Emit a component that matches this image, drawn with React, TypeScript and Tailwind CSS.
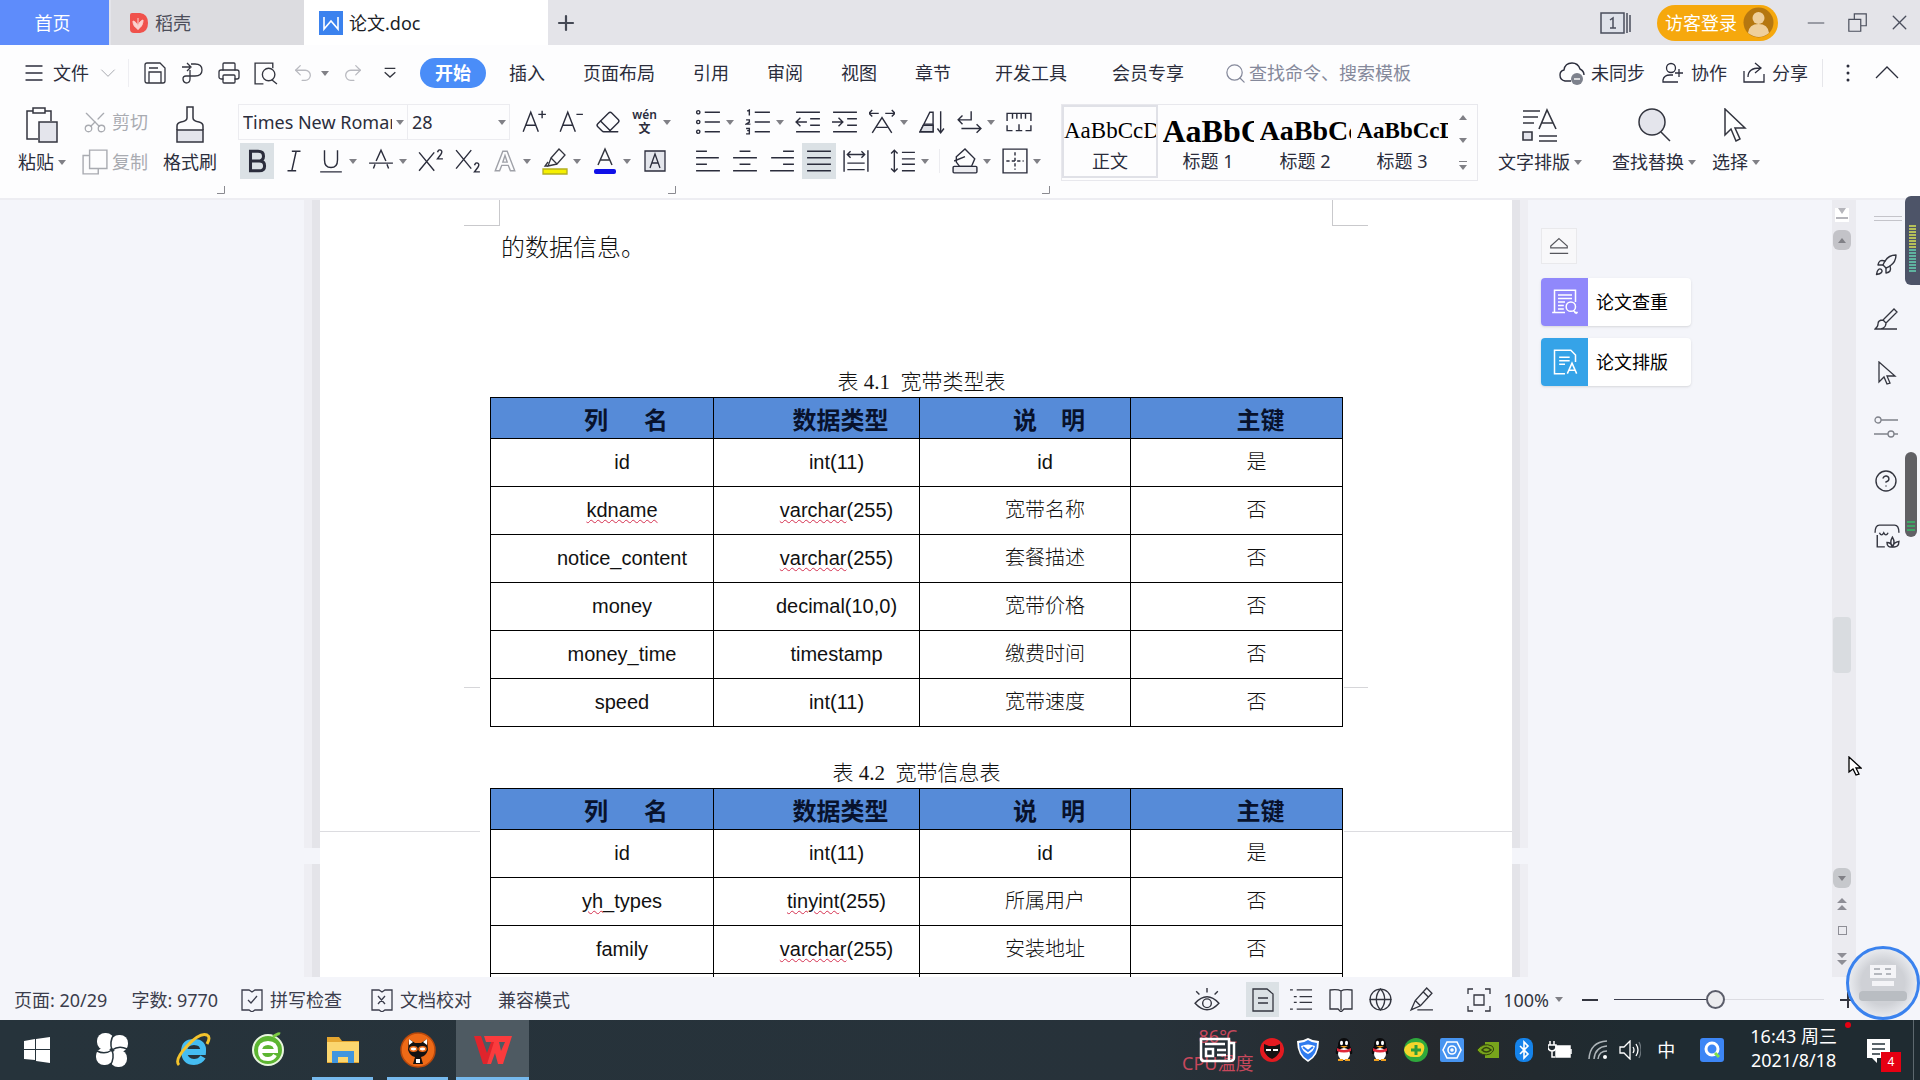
import React from "react";
import {
  CircleHelp,
  Eraser,
  Globe,
  Menu,
  Plus,
  Printer,
  Redo2,
  Rocket,
  Scissors,
  Search,
  Undo2,
  X,
} from "lucide-react";

type Row = {
  name: string;
  type: string;
  desc: string;
  key: string;
  wavy?: string;
};

const broadbandTypes: Row[] = [
  { name: "id", type: "int(11)", desc: "id", key: "是" },
  { name: "kdname", type: "varchar(255)", desc: "宽带名称", key: "否", wavy: "kdname" },
  { name: "notice_content", type: "varchar(255)", desc: "套餐描述", key: "否" },
  { name: "money", type: "decimal(10,0)", desc: "宽带价格", key: "否" },
  { name: "money_time", type: "timestamp", desc: "缴费时间", key: "否" },
  { name: "speed", type: "int(11)", desc: "宽带速度", key: "否" },
];

const broadbandInfo: Row[] = [
  { name: "id", type: "int(11)", desc: "id", key: "是" },
  { name: "yh_types", type: "tinyint(255)", desc: "所属用户", key: "否", wavy: "yh" },
  { name: "family", type: "varchar(255)", desc: "安装地址", key: "否" },
];

const menuTabs = ["插入", "页面布局", "引用", "审阅", "视图", "章节"];

const styleItems = [
  { label: "标题 1", sample: "AaBbC", cls: "text-[32px]" },
  { label: "标题 2", sample: "AaBbCc", cls: "text-[28px]" },
  { label: "标题 3", sample: "AaBbCcD", cls: "text-[23px]" },
];

function Ico({
  children,
  size = 26,
  className = "",
  sw = 1.3,
}: {
  children: React.ReactNode;
  size?: number;
  className?: string;
  sw?: number;
}) {
  return (
    <svg
      width={size}
      height={size}
      viewBox="0 0 24 24"
      fill="none"
      stroke="currentColor"
      strokeWidth={sw}
      className={`shrink-0 ${className}`}
    >
      {children}
    </svg>
  );
}

function Arrow({ className = "" }: { className?: string }) {
  return (
    <svg width="8" height="5" viewBox="0 0 8 5" className={`shrink-0 text-[#808086] ${className}`}>
      <path d="M0 0h8L4 5z" fill="currentColor" />
    </svg>
  );
}

function Tool({
  label,
  children,
  arrow,
  active,
}: {
  label: string;
  children: React.ReactNode;
  arrow?: boolean;
  active?: boolean;
}) {
  return (
    <button aria-label={label} className={`flex h-9 items-center ${arrow ? "w-[50px]" : "w-[37px]"}`}>
      <span className="flex w-[37px] shrink-0 justify-center">
        <span className={`flex h-9 w-[34px] items-center justify-center ${active ? "bg-[#dbe1e5]" : ""}`}>
          {children}
        </span>
      </span>
      {arrow && <Arrow />}
    </button>
  );
}

function Corner({ className = "" }: { className?: string }) {
  return (
    <svg width="8" height="8" viewBox="0 0 8 8" className={`mb-1 self-end text-[#8a8a90] ${className}`}>
      <path d="M7.5 0v7.5H0" fill="none" stroke="currentColor" />
    </svg>
  );
}

function TitleBar() {
  return (
    <header className="flex h-[45px] bg-[#e4e4e9] text-lg">
      <button className="w-[109px] bg-[#5e8cfb] pr-1 text-white">首页</button>
      <button className="ml-0.5 flex w-[193px] items-center gap-1.5 bg-[#dcdce0] pl-[18px] text-[#4c4e5a]">
        <svg width="20" height="22" viewBox="0 0 20 22">
          <path d="M1 3Q1 1 3 1h8q8 1 8 10t-8 10H5q-4 0-4-4z" fill="#f0524c" />
          <path d="M9 18V6M9 17C5 15 4 12 4 9c3 1 5 3 5 8zm0 0c4-2 5-6 5-9-3 1-5 4-5 9z" fill="#fbd3cf" stroke="#fbd3cf" />
        </svg>
        稻壳
      </button>
      <button className="flex w-[244px] items-center gap-1.5 bg-white pl-[15px] text-[#1c1e26]">
        <svg width="24" height="24" viewBox="0 0 24 24">
          <path d="M0 0h24v24H0z" fill="#3b82ee" />
          <path d="M5 6v12l7-8 7 8V6" fill="none" stroke="#fff" strokeWidth="1.600" />
        </svg>
        论文.doc
      </button>
      <button aria-label="新建" className="ml-1 px-0.5 text-[#444854]">
        <Plus size={24} strokeWidth={2.2} />
      </button>
      <div className="ml-auto flex items-center text-[#4a4e5c]">
        <button aria-label="窗口">
          <svg width="34" height="26" viewBox="0 0 34 26" fill="none" stroke="currentColor" strokeWidth="1.5">
            <path d="M2 3h23v20H2z" fill="#dfe2ea" />
            <path d="M28 3v20M31 5v17M11 10l3-2v10M11 18h6" />
          </svg>
        </button>
        <button className="ml-6 flex h-9 items-center gap-1.5 rounded-full bg-[#f6a80d] pr-1 pl-2 text-white">
          访客登录
          <svg width="31" height="31" viewBox="0 0 31 31">
            <circle cx="15.500" cy="15.500" r="15" fill="#b57710" />
            <circle cx="15.500" cy="11" r="6" fill="#efcf9b" />
            <path d="M5 26q1-9 10.500-9T26 26q-10 8-21 0z" fill="#efcf9b" />
          </svg>
        </button>
        <button aria-label="最小化" className="ml-[29px]">
          <Ico size={18}><path d="M1 12h22" /></Ico>
        </button>
        <button aria-label="还原" className="ml-[22px]">
          <Ico size={22}><path d="M2 8h13v13H2zM8 8V2h13v13h-6" /></Ico>
        </button>
        <button aria-label="关闭" className="mr-2 ml-[18px]">
          <X size={25} strokeWidth={1.3} />
        </button>
      </div>
    </header>
  );
}

function MenuBar() {
  return (
    <nav className="flex h-14 items-center text-lg text-[#2b2d3c]">
      <button className="ml-[22px] flex items-center gap-[7px]">
        <Menu size={24} strokeWidth={1.4} />
        文件
        <Ico size={16} className="ml-1 text-[#9a9ca4]"><path d="M2 7l10 10L22 7" /></Ico>
      </button>
      <div className="ml-3 h-7 w-px bg-[#eeeef2]" />
      <div className="ml-[7px] flex text-[#33353f]">
        <Tool label="保存">
          <Ico size={24}><path d="M2 4q0-2 2-2h13l5 5v13q0 2-2 2H4q-2 0-2-2zM6 22V11h12v11M6 7h9" /></Ico>
        </Tool>
        <Tool label="输出">
          <Ico size={24}><path d="M2 6h8M7 2l4 4-4 4M11 3h4q7 0 7 6t-7 6H6q-3 0-3 3t3 4q4 0 4-4V9" /></Ico>
        </Tool>
        <Tool label="打印">
          <Printer size={24} strokeWidth={1.3} />
        </Tool>
        <Tool label="打印预览">
          <Ico size={25}><path d="M10 22H2V2h17v5" /><circle cx="15" cy="13" r="6" /><path d="M18 18l5 4" /></Ico>
        </Tool>
        <Tool label="撤销" arrow>
          <Undo2 size={22} strokeWidth={1.4} className="text-[#b9bac0]" />
        </Tool>
        <Tool label="恢复">
          <Redo2 size={22} strokeWidth={1.4} className="text-[#b9bac0]" />
        </Tool>
        <Tool label="自定义快速访问">
          <Ico size={16} sw={2}><path d="M4 5h16M4 11l8 7 8-7" /></Ico>
        </Tool>
      </div>
      <button className="ml-3 h-[30px] rounded-full bg-[#4a8df8] px-[15px] font-bold text-white">开始</button>
      <div className="ml-[23px] flex gap-[38px]">
        {menuTabs.map((tab) => (
          <button key={tab}>{tab}</button>
        ))}
      </div>
      <button className="ml-[44px]">开发工具</button>
      <button className="ml-[45px]">会员专享</button>
      <label className="ml-[40px] flex flex-1 items-center gap-0.5 text-[#85899b]">
        <Search size={23} strokeWidth={1.3} />
        <input
          aria-label="查找命令"
          placeholder="查找命令、搜索模板"
          className="w-[180px] bg-transparent outline-none placeholder:text-[#85899b]"
        />
      </label>
      <button className="flex items-center gap-1.5">
        <svg width="26" height="24" viewBox="0 0 26 24" fill="none" stroke="currentColor" strokeWidth="1.4">
          <path d="M12 20H6q-5-1-5-6 0-4 4-5 1-7 8-7 6 0 8 6 4 2 4 6" />
          <circle cx="18" cy="18" r="6" fill="#7d818c" stroke="none" />
          <path d="M15 18h6" stroke="#fff" />
        </svg>
        未同步
      </button>
      <button className="ml-4 flex items-center gap-1.5">
        <Ico size={24}><circle cx="10" cy="7" r="4.500" /><path d="M17 21H2v-2q1-5 7-5h3M18 8v8M14 12h8" /></Ico>
        协作
      </button>
      <button className="ml-[15px] flex items-center gap-1.5">
        <Ico size={24}><path d="M2 10v11h20v-8M6 16q0-9 12-9M13 2l6 5-6 5" /></Ico>
        分享
      </button>
      <div className="ml-3.5 h-7 w-px bg-[#e6e6ea]" />
      <button aria-label="更多" className="ml-[22px]">
        <svg width="6" height="20" viewBox="0 0 6 20" fill="currentColor">
          <circle cx="3" cy="3" r="1.500" />
          <circle cx="3" cy="10" r="1.500" />
          <circle cx="3" cy="17" r="1.500" />
        </svg>
      </button>
      <button aria-label="收起功能区" className="mr-[21px] ml-6">
        <Ico size={24}><path d="M1 17L12 6l11 11" /></Ico>
      </button>
    </nav>
  );
}

function BigButton({ label, children, arrow }: { label: string; children: React.ReactNode; arrow?: boolean }) {
  return (
    <button className="flex flex-col items-center">
      <span className="flex h-[42px] items-center">{children}</span>
      <span className="flex h-8 items-center gap-1">
        {label}
        {arrow && <Arrow />}
      </span>
    </button>
  );
}

function FontGroup() {
  return (
    <div className="ml-[13px]">
      <div className="flex h-9 items-center">
        <div className="relative flex h-9 w-[170px] items-center border border-[#ececf0]">
          <input aria-label="字体" defaultValue="Times New Roman" className="w-[153px] pl-1 outline-none" />
          <Arrow className="ml-1" />
        </div>
        <div className="mr-[5px] flex h-9 w-[102px] items-center border border-l-0 border-[#ececf0]">
          <input aria-label="字号" defaultValue="28" className="w-[90px] pl-1 outline-none" />
          <Arrow />
        </div>
        <Tool label="增大字号">
          <Ico><path d="M2 21L9 3l7 18M4 15h10M16 5h7M19.500 1.500v7" /></Ico>
        </Tool>
        <Tool label="减小字号">
          <Ico><path d="M2 21L9 3l7 18M4 15h10M17 5h6" /></Ico>
        </Tool>
        <Tool label="清除格式">
          <Eraser size={26} strokeWidth={1.3} />
        </Tool>
        <Tool label="拼音指南" arrow>
          <span className="flex flex-col items-center text-xs leading-[14px] font-semibold">
            <span>wén</span>
            <span>文</span>
          </span>
        </Tool>
      </div>
      <div className="mt-[3px] flex h-9 items-center">
        <Tool label="加粗" active>
          <Ico sw={2.8}><path d="M6 3h7q5 0 5 4.500T13 12H6zM6 12h8q5 0 5 4.500T14 21H6z" /></Ico>
        </Tool>
        <Tool label="倾斜">
          <Ico><path d="M10 3h8M6 21h8M14 3l-4 18" /></Ico>
        </Tool>
        <Tool label="下划线" arrow>
          <Ico><path d="M6 2v9q0 7 6 7t6-7V2M2 22h20" /></Ico>
        </Tool>
        <Tool label="删除线" arrow>
          <Ico><path d="M7.500 12L12 2l4.500 10M5 19l1.500-4M19 19l-1.500-4M1 14h22" /></Ico>
        </Tool>
        <Tool label="上标">
          <Ico><path d="M1 4l14 17M15 4L1 21M18 4q1-3 3-2 2 1 0 4l-3 4h5" /></Ico>
        </Tool>
        <Tool label="下标">
          <Ico><path d="M1 2l14 17M15 2L1 19M18 16q1-3 3-2 2 1 0 4l-3 4h5" /></Ico>
        </Tool>
        <Tool label="文字效果" arrow>
          <Ico className="text-[#9fa1a8]"><path d="M3 21L10 3h4l7 18h-4l-2-5H9l-2 5zM12 7l-2 6h4z" /></Ico>
        </Tool>
        <Tool label="突出显示" arrow>
          <svg width="26" height="28" viewBox="0 0 26 28" fill="none" stroke="#33353f" strokeWidth="1.300">
            <path d="M1 22h24v5H1z" fill="#f6f000" stroke="#b3ae20" />
            <path d="M9 11l8-9 6 6-8 9zM9 11l-3 8 9-2M6 19H3l3-4" />
          </svg>
        </Tool>
        <Tool label="字体颜色" arrow>
          <svg width="24" height="28" viewBox="0 0 24 28" fill="none" stroke="#33353f" strokeWidth="1.500">
            <path d="M5 18L12 2l7 16M7 13h10" />
            <rect x="1" y="22" width="22" height="5" rx="2" fill="#1010e8" stroke="none" />
          </svg>
        </Tool>
        <Tool label="字符底纹">
          <Ico size={24}><path d="M2 2h20v20H2z" fill="#e4e6ec" /><path d="M7 19l5-14 5 14M8.500 14h7" /></Ico>
        </Tool>
      </div>
    </div>
  );
}

function ParagraphGroup() {
  return (
    <div className="ml-[13px]">
      <div className="flex h-9 items-center">
        <Tool label="项目符号" arrow>
          <Ico>
            <path d="M9 3h14M9 12h14M9 21h14" />
            <circle cx="3" cy="3" r="1.500" />
            <circle cx="3" cy="12" r="1.500" />
            <circle cx="3" cy="21" r="1.500" />
          </Ico>
        </Tool>
        <Tool label="编号" arrow>
          <Ico><path d="M9 3h14M9 12h14M9 21h14M2 2l2-1v5M1 10h3v2l-3 2h4M1 18h3v5H1M2 20h2" /></Ico>
        </Tool>
        <Tool label="减少缩进">
          <Ico><path d="M1 3h22M14 9h9M14 15h9M1 21h22M1 12h10M5 8l-4 4 4 4" /></Ico>
        </Tool>
        <Tool label="增加缩进">
          <Ico><path d="M1 3h22M14 9h9M14 15h9M1 21h22M0 12h10M6 8l4 4-4 4" /></Ico>
        </Tool>
        <Tool label="字符缩放" arrow>
          <Ico><path d="M3 22L12 8l9 14M7 17h10M0 4h9M3 1L0 4l3 3M15 4h9M21 1l3 3-3 3" /></Ico>
        </Tool>
        <Tool label="排序">
          <Ico><path d="M1 21L10 3h3v18zM5 14h8M20 2v20M17 18l3 4 3-4" /><path d="M4 15h9v6H1z" fill="#dfe1e7" /></Ico>
        </Tool>
        <Tool label="换行标记" arrow>
          <Ico><path d="M14 2v8H2M6 6l-4 4 4 4M5 18h18M19 14l4 4-4 4" /></Ico>
        </Tool>
        <Tool label="制表位">
          <Ico><path d="M1 11V4h22v7M6 4v5M10 4v5M14 4v5M18 4v5M1 15v5h5M18 20h5v-5M9 20h6M12 14v6" /></Ico>
        </Tool>
      </div>
      <div className="mt-[3px] flex h-9 items-center">
        <Tool label="左对齐">
          <Ico><path d="M1 3h10M1 9h21M1 15h10M1 21h22" /></Ico>
        </Tool>
        <Tool label="居中">
          <Ico><path d="M7 3h10M1 9h22M7 15h10M1 21h22" /></Ico>
        </Tool>
        <Tool label="右对齐">
          <Ico><path d="M13 3h10M2 9h21M13 15h10M1 21h22" /></Ico>
        </Tool>
        <Tool label="两端对齐" active>
          <Ico><path d="M1 3h22M1 9h22M1 15h22M1 21h22" /></Ico>
        </Tool>
        <Tool label="分散对齐">
          <Ico><path d="M1 2v20M23 2v20M4 6h16M7 3L4 6l3 3M17 3l3 3-3 3M4 14h16M4 20h16" /></Ico>
        </Tool>
        <div className="w-2.5" />
        <Tool label="行距" arrow>
          <Ico><path d="M4 2v20M1 5l3-3 3 3M1 19l3 3 3-3M11 4h12M11 10h12M11 15h12M11 21h12" /></Ico>
        </Tool>
        <div className="mr-1.5 ml-[5px] h-6 w-px bg-[#ececf0]" />
        <Tool label="底纹颜色" arrow>
          <Ico><path d="M4 8l8-7 9 9-3 7H7l-3-4zM2 12l10-4" /><rect x="1" y="17" width="22" height="6" rx="1" fill="#ececf0" /></Ico>
        </Tool>
        <Tool label="边框" arrow>
          <Ico><path d="M1 1h22v22H1z" /><path d="M4 12h16M12 4v16" strokeDasharray="3 2" /></Ico>
        </Tool>
      </div>
    </div>
  );
}

function StyleGallery() {
  return (
    <div className="ml-[11px] flex h-[77px] border border-[#e8e8ed]">
      <button className="flex h-[73px] w-[96px] flex-col items-center border-2 border-[#e0e1e7]">
        <span className="h-[42px] w-full overflow-hidden pt-1 text-left [font-family:'Liberation_Serif',serif] text-[23px] leading-10 text-black">
          AaBbCcD
        </span>
        正文
      </button>
      {styleItems.map((item) => (
        <button key={item.label} className="ml-[3px] flex w-[94px] flex-col items-center pt-0.5">
          <span
            className={`h-[42px] w-[91px] overflow-hidden pt-1 text-left [font-family:'Liberation_Serif',serif] leading-10 font-bold text-black ${item.cls}`}
          >
            {item.sample}
          </span>
          {item.label}
        </button>
      ))}
      <div className="flex w-7 flex-col items-center justify-between py-2.5">
        <Arrow className="rotate-180" />
        <Arrow />
        <span className="flex flex-col items-center gap-[3px] text-[#808086]">
          <span className="h-px w-2 bg-[#808086]" />
          <Arrow />
        </span>
      </div>
    </div>
  );
}

function Ribbon() {
  return (
    <div className="flex h-[99px] items-start border-b-2 border-[#ededf2] pt-[3px] text-lg leading-6 text-[#2b2d3c]">
      <div className="ml-[18px]">
        <BigButton label="粘贴" arrow>
          <svg width="32" height="36" viewBox="0 0 32 36" fill="none" stroke="#33353f" strokeWidth="1.500">
            <path d="M12 32H1V4h6M19 4h6v10M7 1h12v5H7z" />
            <path d="M13 15h18v20H13z" fill="#e4e5ec" />
          </svg>
        </BigButton>
      </div>
      <div className="ml-4 text-[#a9abb1]">
        <button className="flex h-9 items-center gap-1">
          <Scissors size={26} strokeWidth={1.2} className="-rotate-90" />
          剪切
        </button>
        <button className="mt-1 flex h-9 items-center gap-1">
          <Ico><path d="M7 1h16v17H7zM7 6H1v17h14v-5" /></Ico>
          复制
        </button>
      </div>
      <div className="ml-[15px]">
        <BigButton label="格式刷">
          <svg width="28" height="38" viewBox="0 0 28 38" fill="none" stroke="#33353f" strokeWidth="1.500">
            <path d="M1 24h26v12H1z" fill="#e4e5ec" />
            <path d="M1 24v-4q0-3 4-4 6-1 6-4V1h6v11q0 3 6 4 4 1 4 4v4" />
          </svg>
        </BigButton>
      </div>
      <Corner />
      <FontGroup />
      <Corner className="-ml-2" />
      <ParagraphGroup />
      <Corner className="-ml-1" />
      <StyleGallery />
      <div className="ml-5 flex">
        <BigButton label="文字排版" arrow>
          <svg width="36" height="34" viewBox="0 0 36 34" fill="none" stroke="#33353f" strokeWidth="1.600">
            <path d="M1 3h17M1 9h15M1 15h11M17 28h18M17 33h18M17 21l8-19 9 19M20 15h11" />
            <path d="M1 24h9v8H1z" fill="#e4e5ec" />
          </svg>
        </BigButton>
        <div className="w-[30px]" />
        <BigButton label="查找替换" arrow>
          <svg width="34" height="34" viewBox="0 0 34 34" fill="none" stroke="#33353f" strokeWidth="1.500">
            <circle cx="15" cy="14" r="13" fill="#e4e5ec" />
            <path d="M24 24l9 9" />
          </svg>
        </BigButton>
        <div className="w-4" />
        <BigButton label="选择" arrow>
          <svg width="26" height="34" viewBox="0 0 26 34" fill="none" stroke="#33353f" strokeWidth="1.500">
            <path d="M2 1v26l6-6 5 12 4-2-5-11h10z" fill="#fff" />
          </svg>
        </BigButton>
      </div>
    </div>
  );
}

function Wavy({ text, word }: { text: string; word?: string }) {
  if (!word || !text.startsWith(word)) return <>{text}</>;
  return (
    <>
      <span className="underline decoration-[#d5304f] decoration-wavy decoration-1 underline-offset-2">{word}</span>
      {text.slice(word.length)}
    </>
  );
}

function SchemaTable({ caption, rows, shift }: { caption: string; rows: Row[]; shift?: boolean }) {
  return (
    <table className="w-[853px] table-fixed border-collapse text-center text-xl leading-6 text-[#111]">
      <caption
        className={`h-[30px] text-[21px] leading-[30px] font-light whitespace-pre text-[#111] ${shift ? "pl-[10px]" : ""}`}
      >
        {caption}
      </caption>
      <colgroup>
        <col className="w-[223px]" />
        <col className="w-[206px]" />
        <col className="w-[211px]" />
        <col className="w-[212px]" />
      </colgroup>
      <thead>
        <tr className="h-[41px] bg-[#568bd8] text-2xl leading-8 whitespace-pre text-[#08122c]">
          <th className="border border-black p-0 pt-1.5 pl-12">{"列      名"}</th>
          <th className="border border-black p-0 pt-1.5 pl-12">数据类型</th>
          <th className="border border-black p-0 pt-1.5 pl-12">{"说    明"}</th>
          <th className="border border-black p-0 pt-1.5 pl-12">主键</th>
        </tr>
      </thead>
      <tbody className="font-light [font-family:'Liberation_Sans','Noto_Sans_CJK_SC',sans-serif]">
        {rows.map((row) => (
          <tr key={row.name} className="h-12">
            <td className="border border-black p-0 pb-0.5 pl-10">
              <Wavy text={row.name} word={row.wavy} />
            </td>
            <td className="border border-black p-0 pb-0.5 pl-10">
              <Wavy text={row.type} word={row.type.match(/^(varchar|tinyint)/)?.[0]} />
            </td>
            <td className="border border-black p-0 pb-0.5 pl-10">{row.desc}</td>
            <td className="border border-black p-0 pb-0.5 pl-10">{row.key}</td>
          </tr>
        ))}
        {/* the next row starts right at the bottom edge of the view */}
        <tr className={shift ? "hidden" : "h-12"}>
          <td className="border border-black" />
          <td className="border border-black" />
          <td className="border border-black" />
          <td className="border border-black" />
        </tr>
      </tbody>
    </table>
  );
}

function PageSheet() {
  return (
    <div className="relative h-0 min-h-full w-[1192px] bg-white [font-family:'Liberation_Serif','Noto_Sans_CJK_SC',serif]">
      {/* margin marks and the page break */}
      <div className="absolute top-0 left-[144px] h-[26px] w-9 border-r border-b border-[#c9c9cc]" />
      <div className="absolute top-0 right-[144px] h-[26px] w-9 border-b border-l border-[#c9c9cc]" />
      <div className="absolute top-[487px] left-[144px] w-4 border-t border-[#d6d6d9]" />
      <div className="absolute top-[487px] right-[144px] w-6 border-t border-[#d6d6d9]" />
      <div className="absolute top-[631px] left-0 w-40 border-t border-[#dcdce0]" />
      <div className="absolute top-[631px] right-0 w-[168px] border-t border-[#dcdce0]" />
      <p className="pt-8 pl-[181px] text-2xl leading-8 font-light text-[#111]">的数据信息。</p>
      <div className="mt-[103px] ml-[170px] flex flex-col gap-[31px]">
        <SchemaTable caption="表 4.1  宽带类型表" rows={broadbandTypes} shift />
        <SchemaTable caption="表 4.2  宽带信息表" rows={broadbandInfo} />
      </div>
    </div>
  );
}

function PageEdge({ flip }: { flip?: boolean }) {
  return (
    <div className={`flex w-4 flex-col gap-4 ${flip ? "rotate-y-180" : "ml-auto"}`}>
      <div className="h-[648px] border-r-8 border-[#e4e4e9] bg-[#eeeef3]" />
      <div className="flex-1 border-r-8 border-[#e4e4e9] bg-[#eeeef3]" />
    </div>
  );
}

function AssistPanel() {
  return (
    <div className="ml-[13px] flex flex-col items-start pt-[28px] text-lg text-black">
      <button aria-label="收起" className="flex h-9 w-9 items-center justify-center border border-[#e9e9ec] bg-[#f8f8fa]">
        <Ico size={22} className="text-[#55565c]"><path d="M12 4l9 8v2H3v-2zM2 20h20" /></Ico>
      </button>
      <button className="mt-3.5 flex h-12 w-[150px] items-center overflow-hidden rounded bg-white shadow-sm">
        <span className="flex h-12 w-[47px] items-center justify-center bg-[#9088fb] text-white">
          <Ico size={28}><path d="M12 21H1M3 21V2h18v10M6 6h12M6 9h12M6 12h6M6 15h5M6 18h5M20 21h3" /><circle cx="17" cy="16" r="4" /><path d="M19 19l3 3" /></Ico>
        </span>
        <span className="pl-2">论文查重</span>
      </button>
      <button className="mt-3 flex h-12 w-[150px] items-center overflow-hidden rounded bg-white shadow-sm">
        <span className="flex h-12 w-[47px] items-center justify-center bg-[#35a3e8] text-white">
          <Ico size={28}><path d="M12 22H3V2h14l4 4v6M7 8h9M7 11h9M7 14h5M14 22l4-9 4 9M15 19h6" /></Ico>
        </span>
        <span className="pl-2">论文排版</span>
      </button>
    </div>
  );
}

function ScrollRail() {
  return (
    <div className="flex w-6 flex-col items-center bg-[#ebebf0] pr-1 text-[#8e8e96]">
      <svg width="14" height="14" viewBox="0 0 14 14" className="mt-2 bg-white">
        <path d="M3 0h8L7 6zM1 9h12v2H1z" fill="#b5b5bb" />
      </svg>
      <div className="mt-2 flex h-5 w-[18px] items-center justify-center rounded-md bg-[#c3c3c8]">
        <Arrow className="rotate-180" />
      </div>
      <div className="mt-[367px] h-14 w-[18px] rounded bg-[#d9dce0]" />
      <div className="mt-auto flex h-5 w-[18px] items-center justify-center rounded-md bg-[#c6c8cc]">
        <Arrow />
      </div>
      <svg width="10" height="12" viewBox="0 0 10 12" className="mt-2.5" fill="currentColor">
        <path d="M5 0l5 5H0zM5 7l5 5H0z" />
      </svg>
      <div className="mt-4 h-[9px] w-[9px] border border-[#8e8e96]" />
      <svg width="10" height="12" viewBox="0 0 10 12" className="mt-[18px] mb-3" fill="currentColor">
        <path d="M5 5L0 0h10zM5 12L0 7h10z" />
      </svg>
    </div>
  );
}

function SideBar() {
  return (
    <aside className="relative flex w-16 flex-col pl-[18px] text-[#33353f]">
      <div className="mt-4 h-[5px] w-7 border-y border-[#c4c4ca]" />
      <div className="mt-8 flex flex-col items-start gap-[30px]">
        <button aria-label="快捷"><Rocket size={24} strokeWidth={1.4} /></button>
        <button aria-label="样式">
          <Ico size={24}><path d="M1 22h22M9 13L20 2l3 3-11 11M9 13q-5 0-5 4 0 3-3 5 11 1 11-6z" /></Ico>
        </button>
        <button aria-label="选择">
          <Ico size={24}><path d="M5 1v20l5-5 3 7 3-1-3-7h8z" /></Ico>
        </button>
        <button aria-label="属性" className="text-[#7f828a]">
          <Ico size={24}><circle cx="4" cy="5" r="3" /><path d="M7 5h17M0 19h14M20 19h4" /><circle cx="17" cy="19" r="3" /></Ico>
        </button>
        <button aria-label="帮助"><CircleHelp size={24} strokeWidth={1.4} /></button>
        <button aria-label="素材">
          <Ico size={26}><path d="M10 22H3V11M1 9q0-7 4-7h14q4 0 4 7M5 9q2 4 4 0 2 4 4 0M17 22q-3-4 0-9 3 5 0 9zM17 22q-5 1-5-4 4 0 5 4zM17 22q6 1 6-5-5 1-6 5z" /></Ico>
        </button>
      </div>
      <div className="absolute top-[-4px] right-0 flex h-[89px] w-[15px] flex-col justify-end rounded-l-md bg-[#4d5468] p-1 pb-3">
        <div className="h-6 bg-[repeating-linear-gradient(#b5bf5a_0_2px,#4d5468_2px_3px)]" />
        <div className="h-6 bg-[repeating-linear-gradient(#5fb3a0_0_2px,#4d5468_2px_3px)]" />
      </div>
      <div className="absolute top-[252px] right-[3px] flex h-[85px] w-3 flex-col justify-end rounded-full bg-[#606064] px-0.5 pb-1">
        <div className="h-3 bg-[repeating-linear-gradient(#3fa566_0_2px,#606064_2px_4px)]" />
      </div>
      <svg width="14" height="20" viewBox="0 0 14 20" className="absolute top-[556px] left-[-8px] z-10">
        <path d="M1 1v15l4-3 3 6 3-1-3-6h5z" fill="#fff" stroke="#000" strokeWidth="1.300" />
      </svg>
    </aside>
  );
}

function StatusBar() {
  return (
    <footer className="relative flex h-[43px] shrink-0 items-center bg-[#f4f5fa] pt-0.5 text-lg text-[#3b3d4c]">
      <span className="ml-3.5">页面: 20/29</span>
      <span className="ml-6">字数: 9770</span>
      <button className="ml-[22px] flex items-center gap-1.5">
        <Ico size={24}><path d="M9 2H2v20h7l3 2 3-2h7V2h-7l-3 2zM8 12l3 3 6-7" /></Ico>
        拼写检查
      </button>
      <button className="ml-7 flex items-center gap-1.5">
        <Ico size={24}><path d="M9 2H2v20h7l3 2 3-2h7V2h-7l-3 2zM8 8l7 8M15 8l-7 8" /></Ico>
        文档校对
      </button>
      <span className="ml-[26px]">兼容模式</span>
      <div className="ml-auto flex items-center text-[#33353f]">
        <button aria-label="护眼模式" className="mr-[26px]">
          <Ico><path d="M1 15q11-12 22 0-11 12-22 0zM2 4l3 3M12 1v4M22 4l-3 3" /><circle cx="12" cy="15" r="4" /></Ico>
        </button>
        <button aria-label="页面视图" className="mr-[11px] flex h-[35px] w-[33px] items-center justify-center bg-[#dbe1e5]">
          <Ico size={24}><path d="M2 1h14l6 5v17H2zM7 10h10M7 15h10" /></Ico>
        </button>
        <button aria-label="大纲" className="mr-4">
          <Ico size={23}><path d="M7 2h16M10 9h13M10 15h13M7 22h16M0 2h3M4 9h3M4 15h3M0 22h3" /></Ico>
        </button>
        <button aria-label="阅读版式" className="mr-[15px]">
          <Ico size={24}><path d="M12 3q-3-2-11-1v19h8l3 3 3-3h8V2q-8-1-11 1zv19" /></Ico>
        </button>
        <button aria-label="Web版式" className="mr-4">
          <Globe size={25} strokeWidth={1.3} />
        </button>
        <button aria-label="写作模式" className="mr-[33px]">
          <Ico size={25}><path d="M8 22h15M2 22L6 13 17 1l5 5-11 12zM6 13l5 5M14 5l5 5" /></Ico>
        </button>
        <button aria-label="最佳显示比例" className="mr-3">
          <Ico size={24}><path d="M7 7h10v10H7zM6 1H1v5M18 1h5v5M6 23H1v-5M18 23h5v-5" /></Ico>
        </button>
        <button className="flex items-center gap-1.5">100% <Arrow /></button>
        <button aria-label="缩小" className="ml-[19px]">
          <Ico size={16} sw={3}><path d="M0 12h24" /></Ico>
        </button>
        <input
          type="range"
          aria-label="显示比例"
          defaultValue={48}
          className="mr-4 ml-4 h-5 w-[210px] appearance-none bg-[linear-gradient(90deg,#3b3d4c_50%,#dcdce2_50%)] bg-[length:100%_1px] bg-center bg-no-repeat [&::-webkit-slider-thumb]:h-[19px] [&::-webkit-slider-thumb]:w-[19px] [&::-webkit-slider-thumb]:appearance-none [&::-webkit-slider-thumb]:rounded-full [&::-webkit-slider-thumb]:border-2 [&::-webkit-slider-thumb]:border-[#5b5d6a] [&::-webkit-slider-thumb]:bg-[#ececef]"
        />
        <button aria-label="放大" className="mr-16">
          <Ico size={16} sw={3}><path d="M0 12h24M12 0v24" /></Ico>
        </button>
      </div>
      {/* floating assistant */}
      <div className="absolute right-0 bottom-0 flex h-[74px] w-[74px] flex-col items-center justify-center gap-1 rounded-full border-[3px] border-[#3a82ee] bg-[radial-gradient(#cfd1d6_45%,#eceef2_75%)]">
        <svg width="26" height="22" viewBox="0 0 26 22">
          <path d="M0 0h26v13H0zM2 16h22v5H2z" fill="#f4f4f7" />
          <path d="M4 4h6M15 4h6M4 9h8M16 9h5" stroke="#b4b7bd" strokeWidth="2" />
        </svg>
        <div className="h-2.5 w-12 rounded bg-[#b9bdc2]" />
      </div>
    </footer>
  );
}

function TaskButton({
  label,
  children,
  open,
  active,
}: {
  label: string;
  children: React.ReactNode;
  open?: boolean;
  active?: boolean;
}) {
  return (
    <button
      aria-label={label}
      className={`relative flex h-[60px] w-[73px] items-center justify-center ${active ? "bg-[#4e5a62]" : ""}`}
    >
      {children}
      {open && <span className={`absolute bottom-0 h-[3px] bg-[#76b9ed] ${active ? "w-full" : "w-[61px]"}`} />}
    </button>
  );
}

function Penguin() {
  return (
    <svg width="18" height="24" viewBox="0 0 18 24">
      <path d="M9 0q6 0 6 8 3 5 2 8H1q-1-3 2-8 0-8 6-8z" fill="#0b0b0d" />
      <ellipse cx="9" cy="16" rx="6" ry="6" fill="#fff" />
      <ellipse cx="6.500" cy="5" rx="1.500" ry="2.200" fill="#fff" />
      <ellipse cx="11.500" cy="5" rx="1.500" ry="2.200" fill="#fff" />
      <path d="M5 8h8l-4 2z" fill="#f2a01e" />
      <path d="M2 10q7 4 14 0v3q-7 3-14 0z" fill="#e0273a" />
      <path d="M3 22h5M10 22h5" stroke="#f2a01e" strokeWidth="2" />
    </svg>
  );
}

function Taskbar() {
  return (
    <div className="flex h-[60px] shrink-0 bg-[linear-gradient(90deg,#26333b_0%,#27323a_60%,#25292d_75%,#1f2b31_85%)] text-white">
      <div className="flex gap-0.5">
        <TaskButton label="开始">
          <svg width="26" height="26" viewBox="0 0 26 26" fill="#fff">
            <path d="M0 4l11-2v10H0zM12 2l14-2v12H12zM0 13h11v10L0 22zM12 13h14v13l-14-2z" />
          </svg>
        </TaskButton>
        <TaskButton label="搜狗">
          <svg width="34" height="36" viewBox="0 0 34 36" fill="#fff">
            <rect x="2" y="1" width="17" height="17" rx="8" />
            <rect x="16" y="3" width="17" height="17" rx="8" />
            <rect x="15" y="18" width="17" height="17" rx="8" />
            <rect x="1" y="16" width="17" height="17" rx="8" />
            <path
              d="M17 18Q14 10 19 2M17 18q7-5 15-1M17 18q3 8-2 16M17 18q-7 5-15 1"
              fill="none"
              stroke="#26333b"
              strokeWidth="1.500"
            />
          </svg>
        </TaskButton>
      </div>
      <div className="ml-2 flex gap-0.5">
        <TaskButton label="IE浏览器">
          <svg width="36" height="36" viewBox="0 0 36 36" fill="none">
            <path d="M9 20h19q1-10-9-10T9 20q1 10 10 10 6 0 9-5" stroke="#45bdf2" strokeWidth="6" />
            <path d="M4 33Q-1 28 12 14T32 3q4 2 0 9" stroke="#f3c32c" strokeWidth="3" />
          </svg>
        </TaskButton>
        <TaskButton label="360浏览器">
          <svg width="34" height="36" viewBox="0 0 34 36" fill="none">
            <circle cx="17" cy="18" r="15" fill="#5cb531" stroke="#e9f6df" strokeWidth="2" />
            <path d="M9 19h16q0-8-8-8t-8 8 8 8q5 0 7-4" stroke="#fff" strokeWidth="4" />
            <path d="M22 5q5-4 7-3" stroke="#7dcc45" strokeWidth="3" />
          </svg>
        </TaskButton>
        <TaskButton label="文件资源管理器" open>
          <svg width="34" height="28" viewBox="0 0 34 28">
            <path d="M1 1h12l3 4h17v22H1z" fill="#e5a630" />
            <path d="M1 6h32v20H1z" fill="#fbd66f" />
            <path d="M6 15h22v12h-6v-6H12v6H6z" fill="#3f95df" />
          </svg>
        </TaskButton>
        <TaskButton label="录屏" open>
          <svg width="36" height="36" viewBox="0 0 36 36">
            <circle cx="18" cy="18" r="17" fill="#ee6a17" stroke="#b8480b" strokeWidth="1.500" />
            <path d="M9 7l6 4h6l6-4 1 11q-2 6-7 7l2 7H13l2-7q-5-1-7-7z" fill="#141212" />
            <path d="M9 7l4 3-4 3zM27 7l-4 3 4 3z" fill="#fff" />
            <ellipse cx="13.500" cy="17" rx="3.500" ry="2.200" fill="#fff" stroke="#ee6a17" strokeWidth="1.500" />
            <ellipse cx="22.500" cy="17" rx="3.500" ry="2.200" fill="#fff" stroke="#ee6a17" strokeWidth="1.500" />
            <path d="M16 27h4v4h-4z" fill="#fff" />
          </svg>
        </TaskButton>
      </div>
      <div className="ml-0.5">
        <TaskButton label="WPS" open active>
          <svg width="38" height="30" viewBox="0 0 38 30">
            <path d="M0 1h7l6 17 4-11h4l-8 22H9z" fill="#e0242c" />
            <path d="M10 1h28l-9 28h-5l-3-11-4 11h-4l7-22h-8zM25 7l2 9 4-9z" fill="#fb3b3d" />
          </svg>
        </TaskButton>
      </div>
      <div className="ml-auto flex items-center">
        <div className="relative flex w-[73px] flex-col items-center text-lg leading-[27px] text-[#c8485c]">
          <span>86℃</span>
          <span>CPU温度</span>
          <svg width="37" height="26" viewBox="0 0 37 26" fill="none" stroke="#fff" strokeWidth="2.500" className="absolute top-3.5">
            <path d="M2 2h28v22H5q-3 0-3-3zM30 6h5v15q0 3-5 3M6 7h20M18 13h9M18 18h9" />
            <path d="M7 12h7v7H7z" />
          </svg>
        </div>
        <div className="flex items-center">
          <span className="flex w-9 justify-center">
            <svg width="24" height="24" viewBox="0 0 24 24">
              <circle cx="12" cy="12" r="12" fill="#e31a20" />
              <path d="M4 6l5 2h6l5-2v7q-2 5-8 8-6-3-8-8z" fill="#151212" />
              <path d="M6 11h5v2H6zM13 11h5v2h-5z" fill="#fff" />
            </svg>
          </span>
          <span className="flex w-9 justify-center">
            <svg width="24" height="24" viewBox="0 0 24 24">
              <path d="M1 3q6 0 11-3 5 3 11 3 0 15-11 21Q1 18 1 3z" fill="#fff" />
              <path d="M3 5q5 0 9-3 4 3 9 3 0 12-9 17Q3 17 3 5z" fill="#2f7bef" />
              <path d="M5 8q7-3 14 0-1 5-7 8-6-3-7-8z" fill="#fff" />
              <path d="M7 9l5 4 5-4" stroke="#2f7bef" strokeWidth="2" fill="none" />
            </svg>
          </span>
          <span className="flex w-9 justify-center"><Penguin /></span>
          <span className="flex w-9 justify-center"><Penguin /></span>
          <span className="flex w-9 justify-center">
            <svg width="24" height="24" viewBox="0 0 24 24">
              <circle cx="12" cy="12" r="12" fill="#2fa83c" />
              <path d="M0 12Q2 4 12 4t8 8-8 7Q2 20 0 12z" fill="#f4d52c" />
              <path d="M12 7v10M7 12h10" stroke="#2b9b3a" strokeWidth="3" />
            </svg>
          </span>
          <span className="flex w-9 justify-center">
            <svg width="24" height="24" viewBox="0 0 24 24" fill="none" stroke="#fff" strokeWidth="1.600">
              <rect width="24" height="24" rx="2" fill="#4794f0" stroke="none" />
              <path d="M7 4h10l4 8-4 8H7l-4-8z" />
              <circle cx="12" cy="12" r="4" />
              <circle cx="12" cy="12" r="1" />
            </svg>
          </span>
          <span className="flex w-9 justify-center">
            <svg width="22" height="16" viewBox="0 0 22 16">
              <path d="M8 0h14v16H8z" fill="#78a51c" />
              <path d="M0 8q6-8 15-4 4 4-2 8Q5 15 0 8z" fill="#78a51c" stroke="#33420f" />
              <path d="M5 8q4-5 9 0-5 4-9 0z" fill="none" stroke="#33420f" strokeWidth="1.500" />
            </svg>
          </span>
          <span className="flex w-9 justify-center">
            <svg width="18" height="24" viewBox="0 0 18 24">
              <rect width="18" height="24" rx="8" fill="#1583ea" />
              <path d="M5 8l8 8-4 4V4l4 4-8 8" fill="none" stroke="#fff" strokeWidth="1.600" />
            </svg>
          </span>
          <span className="flex w-9 justify-center">
            <svg width="24" height="18" viewBox="0 0 24 18" fill="none" stroke="#fff" strokeWidth="1.500">
              <path d="M2 0v4M6 0v4M0 4h8v3q-1 3-4 3T0 7zM4 10v6h3" />
              <path d="M8 5h14v11H8z" fill="#fff" />
              <path d="M23 8v5" />
            </svg>
          </span>
          <span className="flex w-9 justify-center pl-1">
            <svg width="20" height="20" viewBox="0 0 20 20" fill="none" stroke="#aeb5b9" strokeWidth="1.500">
              <path d="M1 19Q2 2 19 1M6 19Q7 7 19 6M10 19q1-8 9-8" />
              <circle cx="17" cy="17" r="2" fill="#fff" stroke="none" />
            </svg>
          </span>
          <span className="flex w-8 justify-center">
            <svg width="22" height="20" viewBox="0 0 22 20" fill="none" stroke="#fff" strokeWidth="1.300">
              <path d="M1 7h4l6-6v18l-6-6H1zM14 7q2 3 0 6M17 4q4 6 0 12" />
              <path d="M20 2q4 8 0 16" stroke="#6b757b" />
            </svg>
          </span>
          <button className="w-10 text-center text-lg">中</button>
          <span className="ml-2.5 flex w-8 justify-center">
            <svg width="24" height="24" viewBox="0 0 24 24" fill="none">
              <rect width="24" height="24" rx="3" fill="#3d86f5" />
              <circle cx="12" cy="11" r="6" stroke="#fff" strokeWidth="3" />
              <path d="M15 15l4 4" stroke="#7ee04a" strokeWidth="3" />
            </svg>
          </span>
        </div>
        <div className="ml-[22px] pb-1 text-center text-lg leading-6">
          <div>16:43 周三</div>
          <div>2021/8/18</div>
        </div>
        <button aria-label="通知" className="relative mr-3 ml-7 h-9 w-9">
          <svg width="26" height="26" viewBox="0 0 26 26" className="mt-1">
            <path d="M2 0h23v19H12v5l-5-5H2z" fill="#fff" />
            <path d="M7 5h13M7 10h13M7 15h8" stroke="#26333b" strokeWidth="1.500" />
          </svg>
          <span className="absolute -top-2.5 -left-5 h-1.5 w-1.5 rounded-full bg-[#e60012]" />
          <span className="absolute right-0 bottom-[-4px] h-5 w-5 bg-[#e60012] text-xs leading-5">4</span>
        </button>
        <div className="mr-1.5 h-full w-px bg-[#5d686e]" />
      </div>
    </div>
  );
}

export default function App() {
  return (
    <div className="flex h-screen flex-col overflow-hidden bg-[#fdfdfe] [font-family:'Noto_Sans','Noto_Sans_CJK_SC',sans-serif]">
      <TitleBar />
      <MenuBar />
      <Ribbon />
      <main className="flex min-h-0 flex-1 bg-[#f4f5fa]">
        <div className="grid min-w-0 flex-1 grid-cols-[1fr_auto_1fr] overflow-hidden">
          <div className="flex"><PageEdge /></div>
          <PageSheet />
          <div className="flex">
            <PageEdge flip />
            <AssistPanel />
          </div>
        </div>
        <ScrollRail />
        <SideBar />
      </main>
      <StatusBar />
      <Taskbar />
    </div>
  );
}
